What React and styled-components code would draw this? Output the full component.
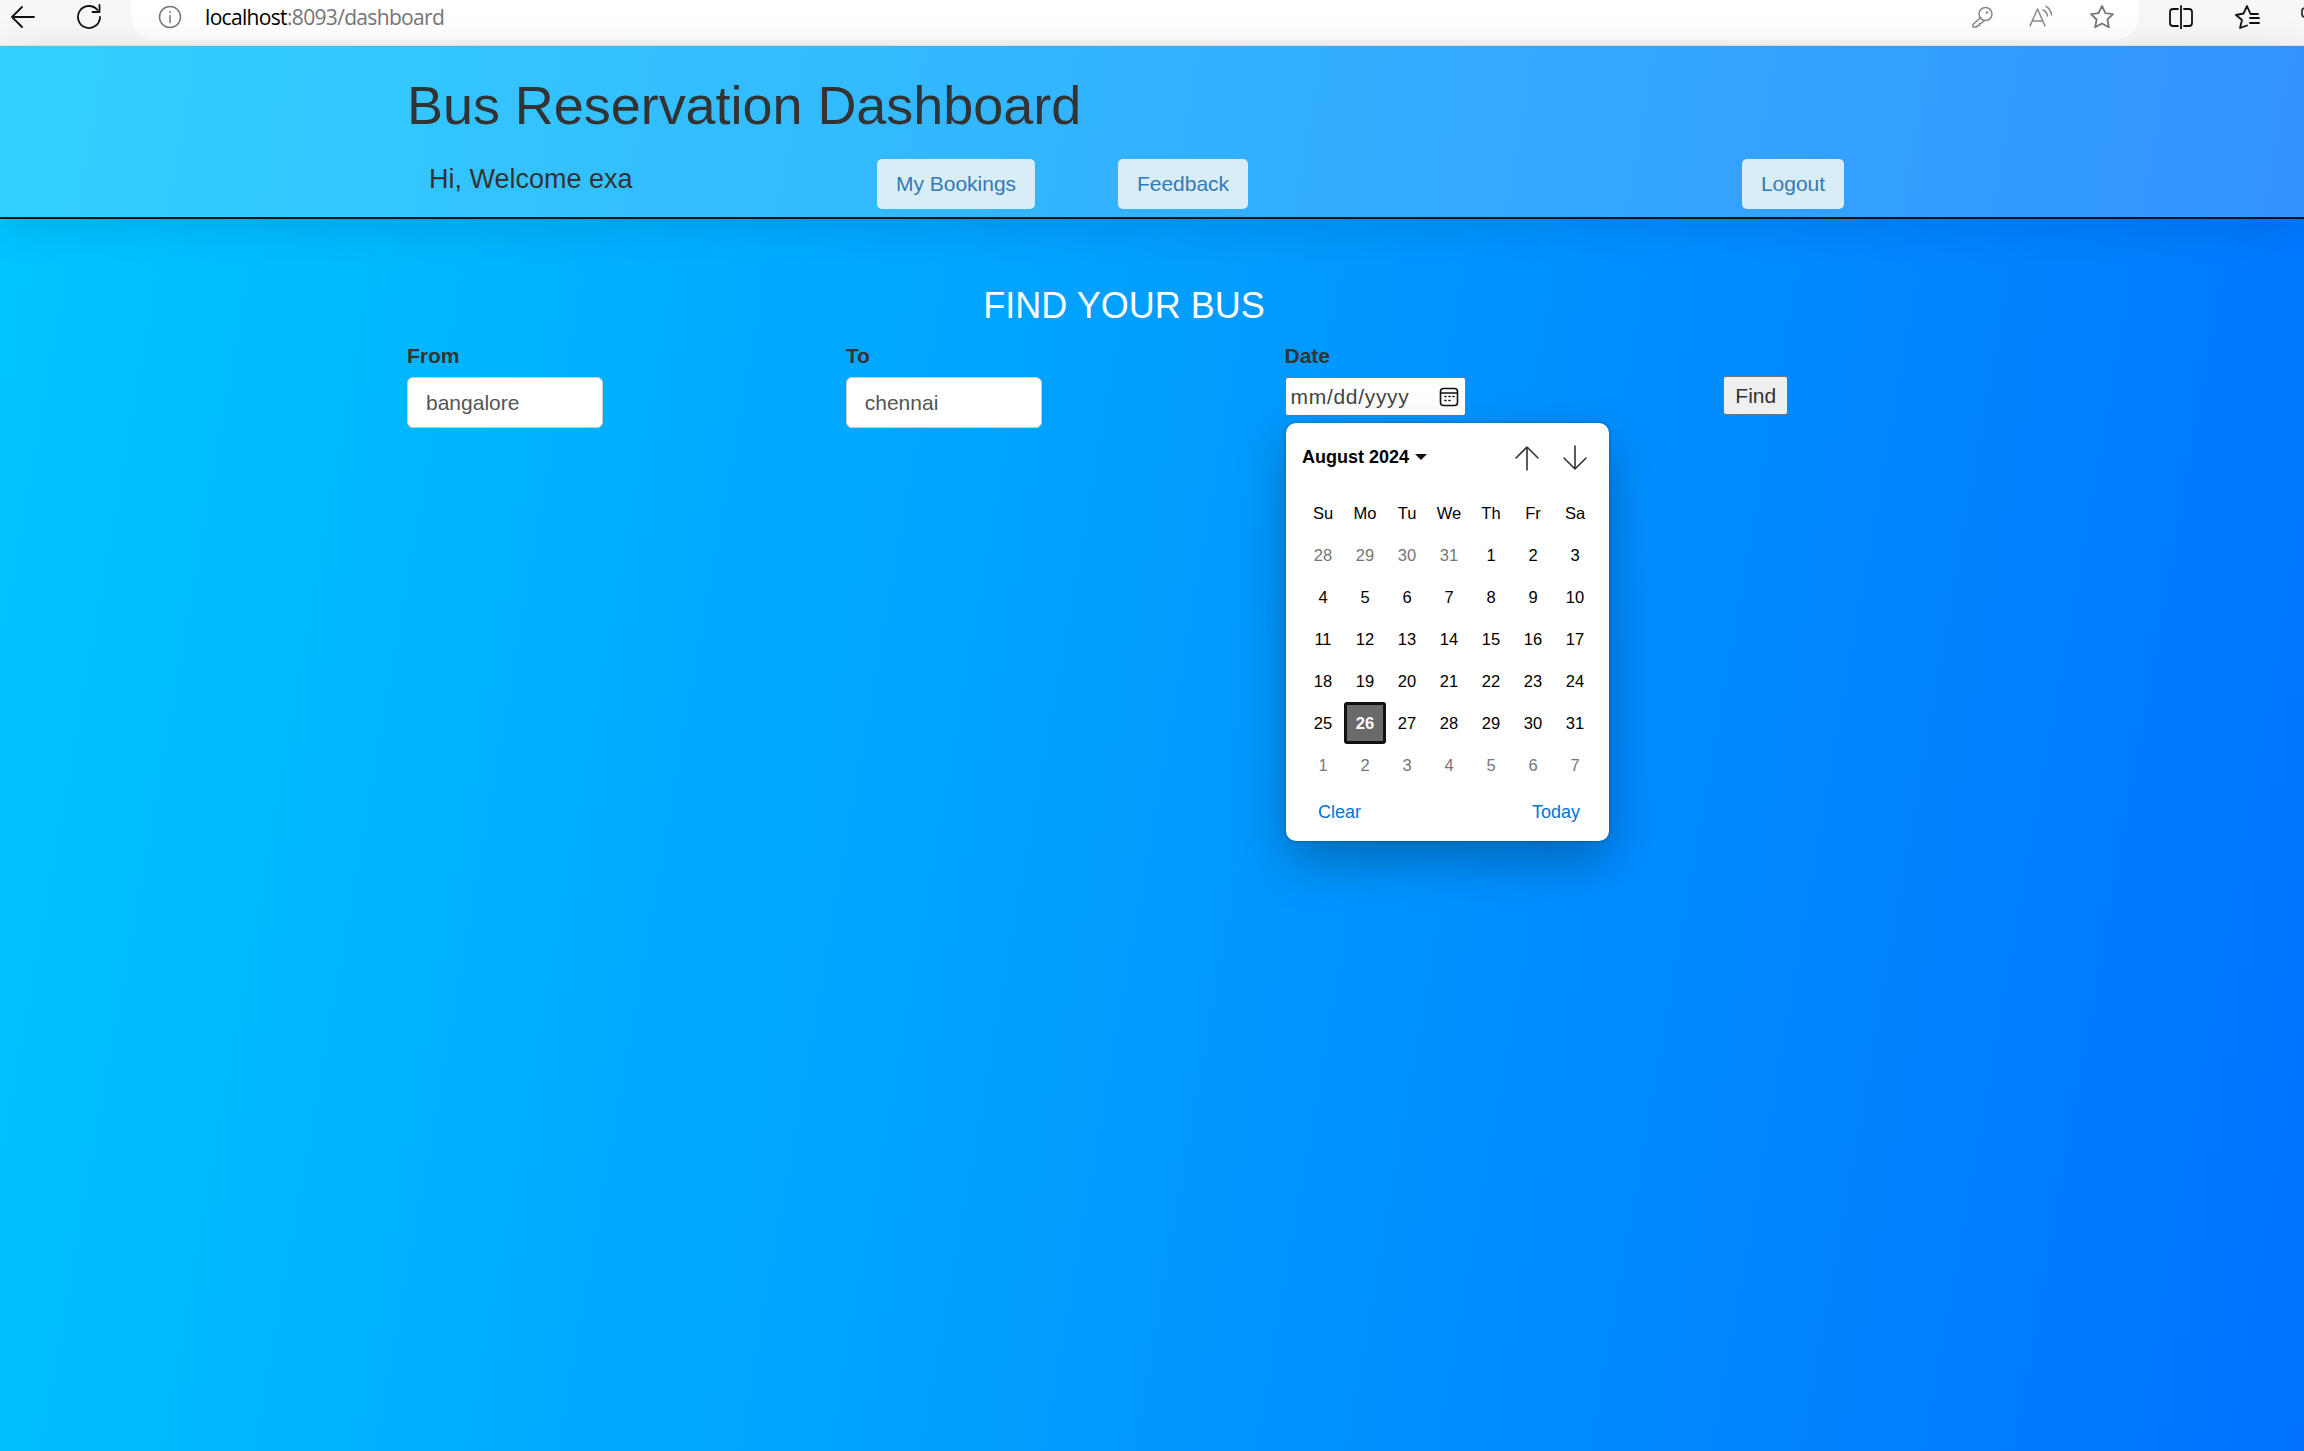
import styled, { createGlobalStyle } from "styled-components";

const GlobalStyle = createGlobalStyle`
    html, body {
        margin: 0;
        padding: 0;
    }
    body {
        font-family: "Liberation Sans", Arial, sans-serif;
        color: #333;
    }
`;

const Page = styled.div`
    position: relative;
    width: 2304px;
    height: 1451px;
    overflow: hidden;
    display: flex;
    flex-direction: column;
`;

const BrowserBar = styled.div`
    height: 45px;
    flex: none;
    display: flex;
    align-items: flex-start;
    background-color: #f7f7f7;
    border-bottom: 1px solid #e6e6e6;
`;

const NavIcons = styled.div`
    width: 131px;
    flex: none;
    display: flex;
    height: 34px;
    align-items: center;
    padding-left: 11px;
    gap: 42px;
    box-sizing: border-box;
`;

const AddressPill = styled.div`
    width: 2008px;
    height: 40px;
    flex: none;
    display: flex;
    align-items: center;
    background-color: #fff;
    border-radius: 0 0 24px 24px;
    padding: 0 24px 6px 27px;
    box-sizing: border-box;
`;

const Url = styled.div`
    margin-left: 23px;
    font-family: "Open Sans", sans-serif;
    font-size: 21px;
    letter-spacing: -0.67px;
    color: #767676;
    flex: 1;
    span {
        color: #000;
    }
`;

const PillIcons = styled.div`
    display: flex;
    align-items: center;
    gap: 36px;
`;

const SideIcons = styled.div`
    flex: 1;
    height: 34px;
    display: flex;
    align-items: center;
    padding-left: 30px;
    gap: 41px;
`;

const Main = styled.div`
    flex: 1;
    background: linear-gradient(100deg, #00c6ff, #0072ff);
`;

const Header = styled.header`
    height: 173px;
    box-sizing: border-box;
    padding: 29px 0 0 407px;
    background-color: rgba(255, 255, 255, 0.2);
    border-bottom: 2px solid #111;
    box-shadow: 0 8px 40px rgba(0, 0, 50, 0.12);
`;

const Title = styled.h1`
    margin: 0;
    font-size: 54px;
    line-height: 60px;
    font-weight: 400;
    letter-spacing: -0.05px;
    color: #333;
`;

const NavRow = styled.div`
    margin-top: 24px;
    display: flex;
    align-items: flex-start;
`;

const Welcome = styled.div`
    width: 448px;
    padding-left: 22px;
    font-size: 27px;
    line-height: 30px;
    margin-top: 5px;
    box-sizing: border-box;
`;

const NavButton = styled.a`
    height: 50px;
    box-sizing: border-box;
    display: flex;
    align-items: center;
    justify-content: center;
    background-color: #d9edf7;
    color: #337ab7;
    font-size: 21px;
    border-radius: 5px;
    width: ${(p) => p.$width}px;
    margin-left: ${(p) => p.$gap}px;
`;

const Content = styled.main`
    padding: 67px 0 0 407px;
`;

const Heading = styled.h3`
    margin: 0;
    width: 1434px;
    text-align: center;
    font-size: 36px;
    line-height: 40px;
    font-weight: 400;
    color: #fff;
`;

const FormRow = styled.div`
    margin-top: 18px;
    display: grid;
    grid-template-columns: repeat(3, 438.75px) auto;
    justify-content: start;
`;

const Field = styled.div`
    position: relative;
    display: flex;
    flex-direction: column;
    align-items: flex-start;
`;

const Label = styled.label`
    font-size: 21px;
    line-height: 24px;
    font-weight: 700;
    color: #333;
    margin-bottom: 9px;
`;

const TextInput = styled.div`
    width: 196px;
    height: 51px;
    box-sizing: border-box;
    display: flex;
    align-items: center;
    padding: 0 18px;
    background-color: #fff;
    border: 1.5px solid #ccc;
    border-radius: 6px;
    font-size: 21px;
    color: #555;
`;

const DateInput = styled.div`
    width: 181px;
    height: 39px;
    box-sizing: border-box;
    display: flex;
    align-items: center;
    justify-content: space-between;
    padding: 0 6px 0 5px;
    background-color: #fff;
    border: 1.5px solid #767676;
    border-radius: 3px;
    font-size: 21px;
    letter-spacing: 0.7px;
    color: #444;
`;

const FindButton = styled.button`
    width: 65px;
    height: 39px;
    margin-top: 32px;
    padding: 0;
    background-color: #efefef;
    border: 1.5px solid #767676;
    border-radius: 3px;
    font-family: inherit;
    font-size: 21px;
    color: #333;
`;

const Calendar = styled.div`
    position: absolute;
    top: 79px;
    left: 1.5px;
    width: 323px;
    height: 418px;
    box-sizing: border-box;
    padding: 20px 16px 0 16px;
    background-color: #fff;
    border-radius: 10px;
    box-shadow: 0 0 4px rgba(0, 0, 0, 0.25), 0 20px 50px rgba(0, 0, 0, 0.28);
    color: #000;
`;

const CalendarTop = styled.div`
    height: 28px;
    display: flex;
    align-items: center;
    justify-content: space-between;
    padding-right: 5px;
`;

const MonthLabel = styled.div`
    display: flex;
    align-items: center;
    gap: 6px;
    font-size: 18px;
    font-weight: 700;
`;

const Caret = styled.span`
    width: 0;
    height: 0;
    border-left: 6px solid transparent;
    border-right: 6px solid transparent;
    border-top: 6px solid #111;
`;

const Arrows = styled.div`
    display: flex;
    gap: 22px;
    margin-top: 2px;
`;

const DayGrid = styled.div`
    margin-top: 21px;
    display: grid;
    grid-template-columns: repeat(7, 42px);
    grid-auto-rows: 42px;
`;

const Cell = styled.div`
    display: flex;
    align-items: center;
    justify-content: center;
    box-sizing: border-box;
    font-size: 16.5px;
    color: ${(p) => (p.$muted ? "#767676" : "#000")};
    ${(p) =>
        p.$selected &&
        `
        background-color: #6a6a6a;
        border: 3px solid #111;
        border-radius: 3px;
        color: #fff;
        font-weight: 700;
    `}
`;

const CalendarFooter = styled.div`
    margin-top: 16px;
    display: flex;
    justify-content: space-between;
    padding: 0 13px 0 16px;
    font-size: 18px;
    color: #0075d2;
`;

function Icon({ w, h, children, color = "#111", sw = 2 }) {
    return (
        <svg width={w} height={h} viewBox={`0 0 ${w} ${h}`} fill="none" stroke={color} strokeWidth={sw} strokeLinecap="round" strokeLinejoin="round">
            {children}
        </svg>
    );
}

const WEEK = ["Su", "Mo", "Tu", "We", "Th", "Fr", "Sa"];
const LEADING = [28, 29, 30, 31];
const TRAILING = [1, 2, 3, 4, 5, 6, 7];
const DAYS = Array.from({ length: 31 }, (_, i) => i + 1);

function DatePopup() {
    return (
        <Calendar>
            <CalendarTop>
                <MonthLabel>August 2024<Caret /></MonthLabel>
                <Arrows>
                    <Icon w={26} h={26} color="#333" sw={1.6}>
                        <path d="M13 25V2M2 13L13 2l11 11" />
                    </Icon>
                    <Icon w={26} h={26} color="#333" sw={1.6}>
                        <path d="M13 1v23M2 13l11 11 11-11" />
                    </Icon>
                </Arrows>
            </CalendarTop>
            <DayGrid>
                {WEEK.map((d) => <Cell key={d}>{d}</Cell>)}
                {LEADING.map((d) => <Cell key={`p${d}`} $muted>{d}</Cell>)}
                {DAYS.map((d) => <Cell key={d} $selected={d === 26}>{d}</Cell>)}
                {TRAILING.map((d) => <Cell key={`n${d}`} $muted>{d}</Cell>)}
            </DayGrid>
            <CalendarFooter>
                <span>Clear</span>
                <span>Today</span>
            </CalendarFooter>
        </Calendar>
    );
}

export default function App() {
    return (
        <Page>
            <GlobalStyle />
            <BrowserBar>
                <NavIcons>
                    <Icon w={24} h={24} sw={1.8}><path d="M23 12H1M11 2L1 12l10 10" /></Icon>
                    <Icon w={26} h={26} sw={1.8}><path d="M20.500 6A11 11 0 1 0 23 13M22.500 1v7h-7" /></Icon>
                </NavIcons>
                <AddressPill>
                    <Icon w={24} h={24} color="#777" sw={1.5}>
                        <circle cx="12" cy="12" r="10.5" />
                        <path d="M12 10.5v7M12 6.500v1" />
                    </Icon>
                    <Url><span>localhost</span>:8093/dashboard</Url>
                    <PillIcons>
                        <Icon w={22} h={22} color="#888" sw={1.5}>
                            <circle cx="14.5" cy="8" r="6.5" />
                            <circle cx="16" cy="6.500" r="0.6" />
                            <path d="M9.700 11.500L2 18.500V21h3.500l1-1.500h2v-2H10l3.500-3" />
                        </Icon>
                        <Icon w={24} h={24} color="#888" sw={1.5}>
                            <path d="M1 21L8.500 4 16 21M3.500 16h10M14 5c2.500 1 4 3 4.500 6M17 1.500c3 1.500 5 4.500 5.500 8.500" />
                        </Icon>
                        <Icon w={26} h={26} color="#777" sw={1.8}>
                            <path d="M13 2l3.400 7.200 7.600 1-5.600 5.300 1.500 7.800L13 19.500l-6.900 3.800 1.500-7.800L2 10.200l7.600-1z" />
                        </Icon>
                    </PillIcons>
                </AddressPill>
                <SideIcons>
                    <Icon w={24} h={24} sw={1.8}>
                        <path d="M9 4H4a3 3 0 0 0-3 3v11a3 3 0 0 0 3 3h5M12 1v23M15 4h5a3 3 0 0 1 3 3v11a3 3 0 0 1-3 3h-5" />
                    </Icon>
                    <Icon w={26} h={26} sw={1.8}>
                        <path d="M24 10h-7.500L13 2 9.500 9.500 2 11l6 5-2 8 7-2.500M16 14h9M16 19h9" />
                    </Icon>
                    <Icon w={10} h={24} color="#333" sw={1.8}>
                        <path d="M4 3a3 3 0 0 0-3 3v3a3 3 0 0 0 3 3" />
                    </Icon>
                </SideIcons>
            </BrowserBar>
            <Main>
                <Header>
                    <Title>Bus Reservation Dashboard</Title>
                    <NavRow>
                        <Welcome>Hi, Welcome exa</Welcome>
                        <NavButton $width={158} $gap={22}>My Bookings</NavButton>
                        <NavButton $width={130} $gap={83}>Feedback</NavButton>
                        <NavButton $width={102} $gap={494}>Logout</NavButton>
                    </NavRow>
                </Header>
                <Content>
                    <Heading>FIND YOUR BUS</Heading>
                    <FormRow>
                        <Field>
                            <Label>From</Label>
                            <TextInput>bangalore</TextInput>
                        </Field>
                        <Field>
                            <Label>To</Label>
                            <TextInput>chennai</TextInput>
                        </Field>
                        <Field>
                            <Label>Date</Label>
                            <DateInput>
                                mm/dd/yyyy
                                <Icon w={20} h={20} sw={1.6}>
                                    <rect x="1.500" y="1.500" width="17" height="17" rx="3" />
                                    <path d="M2 6h16M6 9.500h1M10 9.500h1M14 9.500h1M6 13.500h1M10 13.500h1" />
                                </Icon>
                            </DateInput>
                            <DatePopup />
                        </Field>
                        <FindButton>Find</FindButton>
                    </FormRow>
                </Content>
            </Main>
        </Page>
    );
}
